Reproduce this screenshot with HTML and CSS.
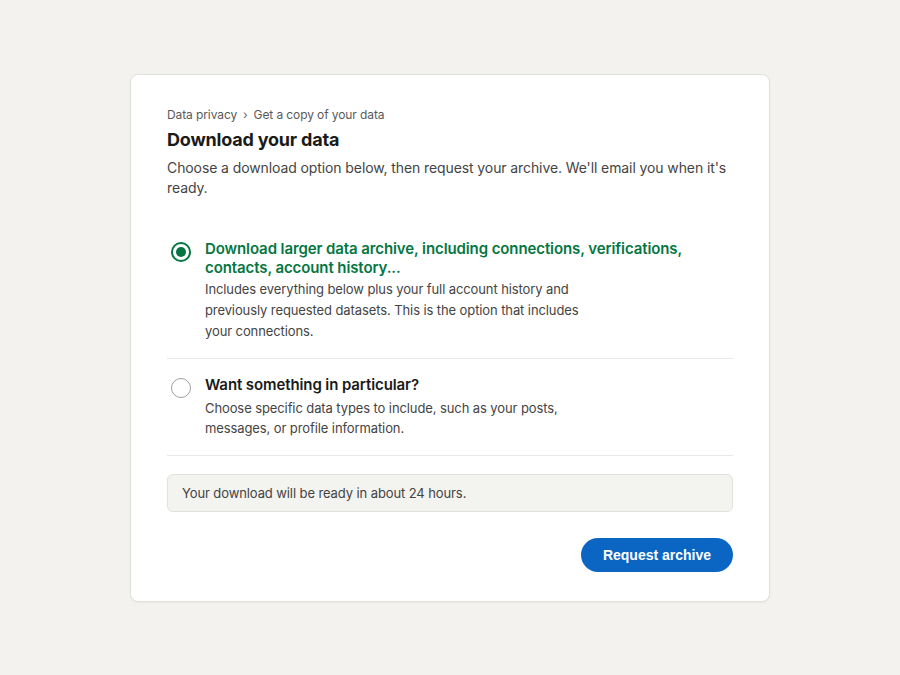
FILE: index.html
```html
<!DOCTYPE html>
<html lang="en">
<head>
<meta charset="utf-8">
<title>Download your data</title>
<link rel="stylesheet" href="styles.css">
</head>
<body>
<main class="page">
  <section class="card">
    <nav class="crumbs"><span>Data privacy</span><span class="sep">›</span><span>Get a copy of your data</span></nav>
    <h1 class="title">Download your data</h1>
    <p class="lead">Choose a download option below, then request your archive. We'll email you when it's ready.</p>

    <div class="options">
      <label class="option first">
        <span class="radio checked"><span class="dot"></span></span>
        <span class="opt-body">
          <span class="opt-title green">Download larger data archive, including connections, verifications, contacts, account history...</span>
          <span class="opt-desc">Includes everything below plus your full account history and previously requested datasets. This is the option that includes your connections.</span>
        </span>
      </label>
      <label class="option second">
        <span class="radio"></span>
        <span class="opt-body">
          <span class="opt-title">Want something in particular?</span>
          <span class="opt-desc">Choose specific data types to include, such as your posts, messages, or profile information.</span>
        </span>
      </label>
    </div>

    <div class="notice">Your download will be ready in about 24 hours.</div>

    <div class="actions">
      <button class="btn">Request archive</button>
    </div>
  </section>
</main>
</body>
</html>
```

FILE: styles.css
```css
* { box-sizing: border-box; }
html, body { margin: 0; padding: 0; }
body {
  background: #f3f2ef;
  font-family: Inter, "Noto Sans", "Liberation Sans", sans-serif;
  color: rgba(0,0,0,0.9);
  letter-spacing: -0.1px;
}
.page {
  width: 900px;
  height: 675px;
  padding: 74px 0 0 130px;
  display: flex;
  align-items: flex-start;
}
.card {
  width: 640px;
  background: #fff;
  border: 1px solid #e0dfdc;
  border-radius: 8px;
  box-shadow: 0 1px 2px rgba(0,0,0,0.04);
  padding: 32px 36px 29px 36px;
}
.crumbs {
  font-size: 12px;
  line-height: 16px;
  color: #5a5a5a;
  display: flex;
  gap: 6px;
}
.crumbs .sep { color: #666; }
.title {
  margin: 5px 0 0 0;
  font-size: 18px;
  line-height: 24px;
  font-weight: 700;
  color: #1a1a1a;
  letter-spacing: -0.2px;
}
.lead {
  margin: 6px 0 0 0;
  font-size: 14px;
  line-height: 20px;
  color: #444;
}
.options {
  margin-top: 25px;
  display: flex;
  flex-direction: column;
}
.option {
  display: flex;
  gap: 14px;
  padding: 16px 0 16px 4px;
  border-bottom: 1px solid #e9e8e5;
}
.option.second { padding-bottom: 17px; }
.radio {
  flex: none;
  width: 20px;
  height: 20px;
  margin-top: 3px;
  border-radius: 50%;
  border: 1.5px solid #a0a0a0;
  display: flex;
  align-items: center;
  justify-content: center;
}
.radio.checked { border: 2px solid #057642; }
.radio .dot {
  width: 10px;
  height: 10px;
  border-radius: 50%;
  background: #057642;
}
.opt-body {
  display: flex;
  flex-direction: column;
}
.opt-title {
  font-size: 15px;
  line-height: 19px;
  font-weight: 600;
  color: #1a1a1a;
}
.opt-title.green { color: #057642; }
.opt-desc {
  margin-top: 2px;
  max-width: 398px;
  font-size: 13px;
  line-height: 21px;
  color: #444;
}
.option.second .opt-desc { line-height: 20px; margin-top: 4px; }
.notice {
  margin-top: 18px;
  height: 38px;
  display: flex;
  align-items: center;
  padding: 0 14px;
  background: #f3f3ef;
  border: 1px solid #e2e1dc;
  border-radius: 6px;
  font-size: 13px;
  color: #444;
}
.actions {
  margin-top: 26px;
  display: flex;
  justify-content: flex-end;
}
.btn {
  height: 34px;
  width: 152px;
  border: none;
  border-radius: 17px;
  background: #0a66c2;
  color: #fff;
  font-family: "Liberation Sans", Arial, sans-serif;
  font-weight: 700;
  font-size: 14px;
  cursor: pointer;
}
```
